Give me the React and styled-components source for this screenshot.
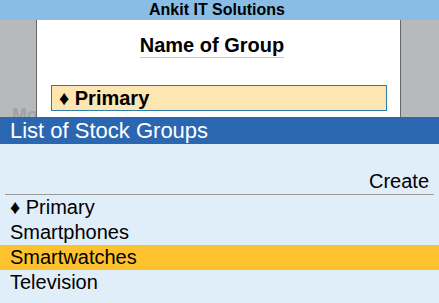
import React from 'react'
import styled, { createGlobalStyle } from 'styled-components'

const Global = createGlobalStyle`
    html, body {
        margin: 0;
        padding: 0;
        background: #e0eefa;
        font-family: "Liberation Sans", Arial, sans-serif;
    }
`

const Page = styled.div`
    width: 439px;
    height: 303px;
    display: flex;
    flex-direction: column;
    overflow: hidden;
`

const TitleBar = styled.div`
    height: 20px;
    background: #89bde6;
    color: #000;
    font-weight: bold;
    font-size: 16px;
    line-height: 20px;
    text-align: center;
    padding-right: 5px;
`

const Backdrop = styled.div`
    height: 97px;
    background: #b6babd;
    display: flex;
`

const Side = styled.div`
    width: ${p => p.width}px;
    display: flex;
    flex-direction: column;
    justify-content: flex-end;
    overflow: hidden;
`

const Ghost = styled.div`
    height: 12px;
    overflow: hidden;
    color: #a0a3a6;
    font-weight: bold;
    font-size: 18px;
    line-height: 20px;
    padding-left: 12px;
    white-space: nowrap;
`

const Panel = styled.div`
    width: 363px;
    background: #fff;
    border-left: 1px solid #666;
    border-right: 1px solid #666;
    display: flex;
    flex-direction: column;
    align-items: center;
`

const Heading = styled.div`
    margin-top: 13px;
    margin-right: 13px;
    font-weight: bold;
    font-size: 20px;
    line-height: 24px;
    border-bottom: 1px solid #c8c8c8;
`

const Field = styled.div`
    margin-top: 27px;
    align-self: flex-start;
    margin-left: 14px;
    width: 327px;
    height: 24px;
    background: #fde6b1;
    border: 1px solid #2a7fb0;
    font-weight: bold;
    font-size: 20px;
    line-height: 24px;
    padding-left: 7px;
`

const ListHeader = styled.div`
    height: 27px;
    background: #2b67b0;
    color: #fff;
    font-size: 22px;
    line-height: 27px;
    padding-left: 10px;
`

const ListBody = styled.div`
    flex: 1;
    background: #e0eefa;
    padding: 0 5px;
    display: flex;
    flex-direction: column;
`

const Action = styled.div`
    margin-top: 25px;
    height: 24px;
    padding-bottom: 1px;
    font-size: 20px;
    line-height: 24px;
    text-align: right;
    padding-right: 5px;
    border-bottom: 1px solid #9c9c9c;
`

const Row = styled.div`
    height: 25px;
    margin: 0 -5px;
    padding-left: 10px;
    font-size: 20px;
    line-height: 25px;
    color: #000;
    background: ${p => (p.active ? '#fec22f' : 'transparent')};
`

const items = ['♦ Primary', 'Smartphones', 'Smartwatches', 'Television']

const App = () => {
  return (
    <Page>
        <Global />
        <TitleBar>Ankit IT Solutions</TitleBar>
        <Backdrop>
            <Side width={36}>
                <Ghost>Mo</Ghost>
            </Side>
            <Panel>
                <Heading>Name of Group</Heading>
                <Field>♦ Primary</Field>
            </Panel>
            <Side width={38} />
        </Backdrop>
        <ListHeader>List of Stock Groups</ListHeader>
        <ListBody>
            <Action>Create</Action>
            {items.map(item => (
                <Row key={item} active={item === 'Smartwatches'}>{item}</Row>
            ))}
        </ListBody>
    </Page>
  )
}

export default App
